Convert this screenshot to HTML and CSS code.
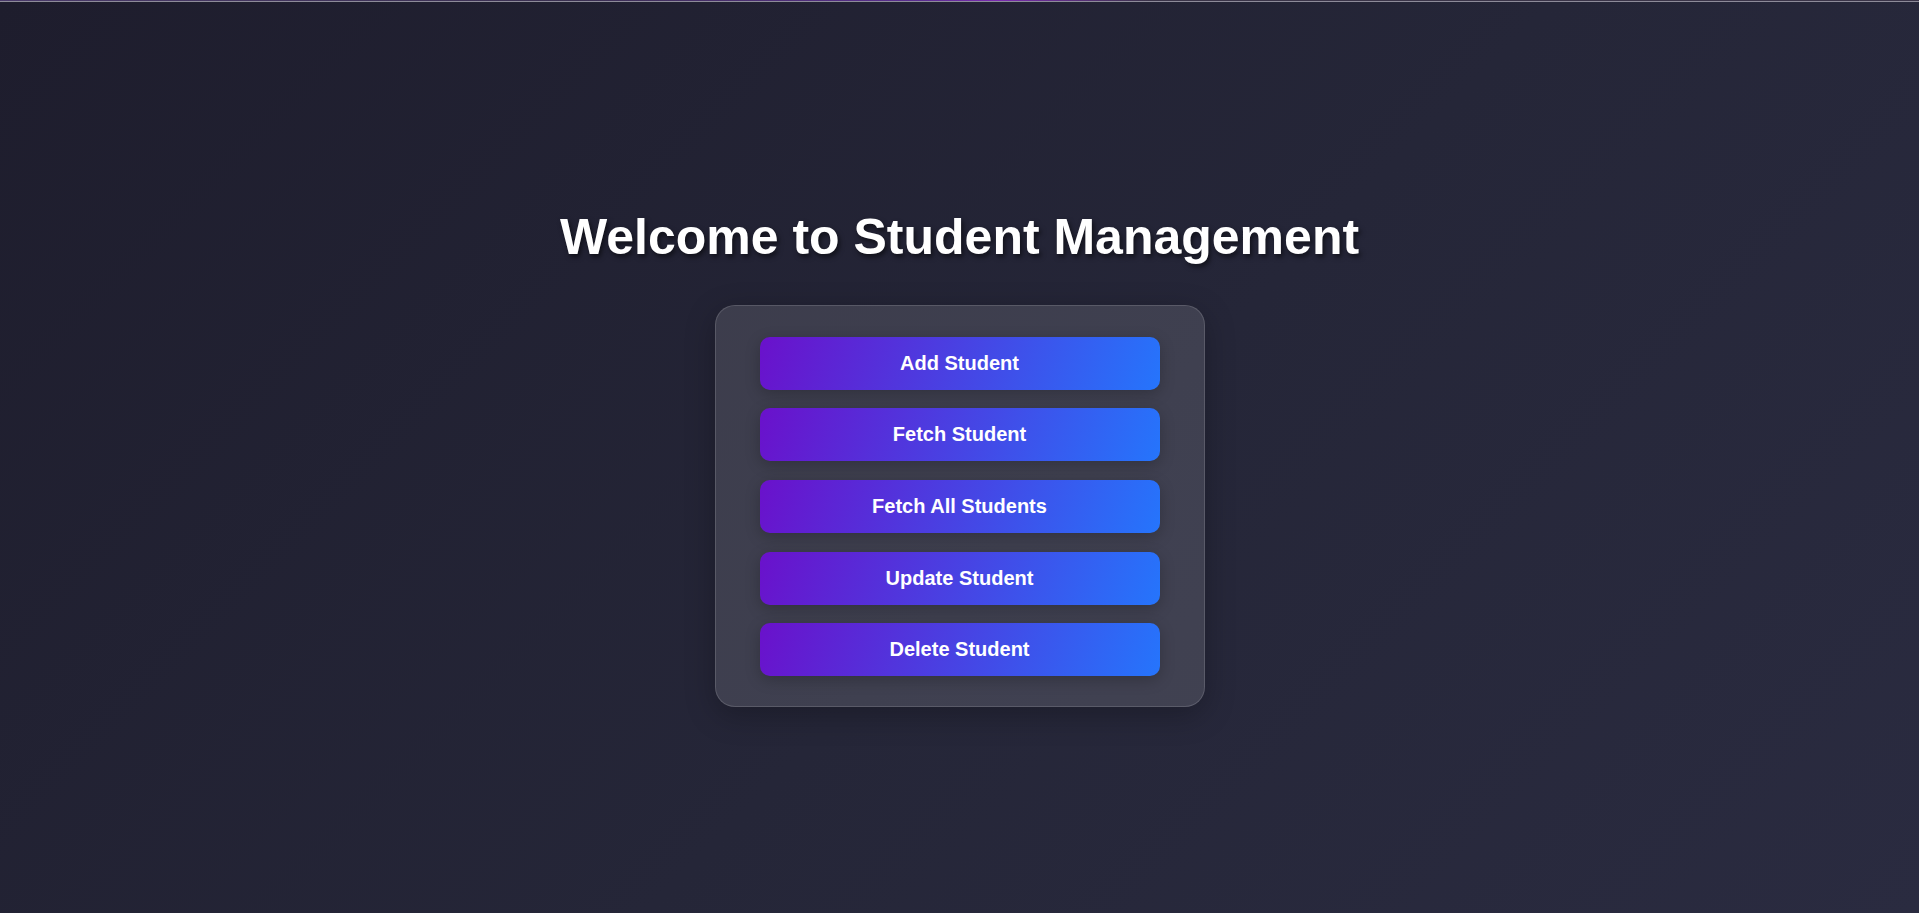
FILE: index.html
```html
<!DOCTYPE html>
<html lang="en">
<head>
<meta charset="utf-8">
<title>Student Management</title>
<link rel="stylesheet" href="styles.css">
</head>
<body>
<div class="topbar"></div>
<main class="page">
  <h1 class="title">Welcome to Student Management</h1>
  <div class="card">
    <button class="btn">Add Student</button>
    <button class="btn">Fetch Student</button>
    <button class="btn">Fetch All Students</button>
    <button class="btn">Update Student</button>
    <button class="btn">Delete Student</button>
  </div>
</main>
</body>
</html>
```

FILE: styles.css
```css
html, body {
  margin: 0;
  padding: 0;
  height: 100%;
}

body {
  font-family: "Liberation Sans", Arial, sans-serif;
  background: linear-gradient(135deg, #1e1d2d 0%, #252638 55%, #2a2b40 100%);
  color: #ffffff;
  display: flex;
  flex-direction: column;
  min-height: 100vh;
  overflow: hidden;
}

.topbar {
  height: 1px;
  border-bottom: 1px solid #8d8b99;
  background: linear-gradient(90deg, #4a3a6a 0%, #3a3050 30%, #5a2d90 48%, #7a2ab0 52%, #3a3448 60%, #3a3448 100%);
  flex: none;
}

.page {
  flex: 1;
  display: flex;
  flex-direction: column;
  align-items: center;
  justify-content: center;
}

.title {
  margin: 0 0 39px;
  font-size: 50px;
  font-weight: 700;
  color: #ffffff;
  text-shadow: 2px 3px 5px rgba(0, 0, 0, 0.55);
}

.card {
  width: 490px;
  box-sizing: border-box;
  padding: 31px 44px 30px;
  border: 1px solid rgba(255, 255, 255, 0.14);
  border-radius: 20px;
  background: rgba(255, 255, 255, 0.12);
  box-shadow: 0 8px 30px rgba(0, 0, 0, 0.25);
  display: flex;
  flex-direction: column;
  gap: 18.7px;
}

.btn {
  display: block;
  width: 100%;
  height: 53px;
  padding: 0;
  border: none;
  border-radius: 10px;
  background: linear-gradient(110deg, #6a11cb 0%, #2575fc 100%);
  color: #ffffff;
  font-family: "Liberation Sans", Arial, sans-serif;
  font-size: 20px;
  font-weight: 700;
  box-shadow: 0 4px 15px rgba(0, 0, 0, 0.22);
  cursor: pointer;
}
```
